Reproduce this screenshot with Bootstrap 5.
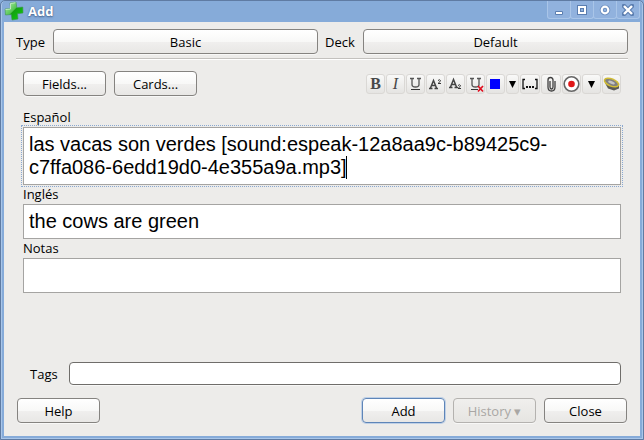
<!DOCTYPE html>
<html lang="en">
<head>
<meta charset="utf-8">
<meta name="viewport" content="width=device-width, initial-scale=1">
<title>Add</title>
<link href="https://cdn.jsdelivr.net/npm/bootstrap@5.3.0/dist/css/bootstrap.min.css" rel="stylesheet">
<style>
body { font: 13px/18px "Open Sans", "Noto Sans", sans-serif; color: #000; background: #86abd9; }
.win { border: 1px solid #5f7ba3; border-radius: 5px 5px 0 0; box-shadow: inset 1px 0 #a9c6e9, inset -1px 0 #a9c6e9, inset 0 -1px #a9c6e9; padding: 0 3px 3px; background: #86abd9; }
.titlebar { height: 21px; color: #fff; }
.titlebar h1 { font-size: 13px; line-height: 21px; font-weight: 700; text-shadow: 0 1px 2px #45648f, 0 0 1px #45648f; }
.plus { width: 20px; height: 20px; }
.wbtn { width: 24px; height: 18px; padding: 0; border: 1px solid #a9c5e8; border-top: 0; border-radius: 0 0 3px 3px; background: #91b2de; margin-left: -1px; }
.wbtn svg { width: 12px; height: 12px; flex-shrink: 0; }
.panel { background: #edecea; padding: 7px 12px 13px; }
.sbtn { height: 25px; padding: 0 4px; font-size: 13px; line-height: 18px; border: 1px solid #858380; border-radius: 4px; color: #000; background: linear-gradient(#fff, #f8f8f7 50%, #f0efee 52%, #e8e7e5); box-shadow: 0 1px #f8f8f7; }
.w-std { width: 83px; }
.sbtn.primary { border-color: #5e85b8; box-shadow: 0 0 0 1px #bfd0e6; }
.sbtn:disabled { color: #a9a7a4; border-color: #b4b2af; background: linear-gradient(#f0efed, #e6e5e2); opacity: 1; }
.lab-type { width: 37px; }
.lab-deck { width: 45px; padding-left: 7px; }
.rule { border-top: 1px solid #c3c1be; border-bottom: 1px solid #fff; height: 2px; margin: 4px 0 11px; }
.inner { padding: 0 7px; }
.tools { gap: 1px; }
.tbtn { width: 19px; height: 20px; padding: 0; border: 1px solid #dad8d5; border-radius: 3px; background: linear-gradient(#f9f9f8, #e5e4e2); color: #484848; font: 16px/18px "Liberation Serif", serif; }
.tbtn svg { width: 17px; height: 18px; display: block; }
.tbtn.slim { width: 13px; }
.tbtn.slim svg { width: 11px; }
.tbtn.wide { width: 20px; }
.tbtn.wide svg { width: 18px; }
.fields { min-height: 254px; margin-top: 12px; }
.flabel { line-height: 19px; height: 19px; }
.frame { position: relative; }
.edit { display: block; width: 100%; height: 35px; padding: 5px; border: 1px solid #a5a4a2; background: #fff; color: #000; font: 20px/23px "Liberation Sans", Arial, sans-serif; resize: none; overflow: hidden; outline: 0; border-radius: 0; }
.edit.two { height: 58px; }
.frame.active::after { content: ""; position: absolute; inset: -2px; border: 1px dotted #8aa8d0; pointer-events: none; }
.caret { position: absolute; left: 323px; top: 29px; width: 1px; height: 23px; background: #000; }
.tags { height: 23px; border: 1px solid #6f6d6a; border-radius: 4px; background: #fff; padding: 0 4px; font-size: 13px; box-shadow: 0 1px #f8f8f7; min-width: 0; }
.lab-tags { width: 46px; padding-left: 7px; }
.foot { margin: 13px 1px 0; gap: 8px; }
</style>
<script src="https://cdn.jsdelivr.net/npm/bootstrap@5.3.0/dist/js/bootstrap.bundle.min.js"></script>
</head>
<body>
<div class="win min-vh-100 d-flex flex-column">
  <header class="titlebar d-flex align-items-start">
    <svg class="plus" viewBox="0 0 20 20" aria-hidden="true">
      <defs><linearGradient id="g" x1="0" y1="0" x2="1" y2="1"><stop offset="0" stop-color="#b8efb3"/><stop offset=".45" stop-color="#56c653"/><stop offset=".5" stop-color="#14a012"/><stop offset="1" stop-color="#0bd30b"/></linearGradient></defs>
      <path d="M6 2l6-1 .8 5.700 6-.7.200 6-5.500.700.500 5.300-6 1-.800-5.500-5.700.500-.400-6 5.400-.600z" fill="url(#g)" stroke="#3f9650" stroke-width=".6"/>
      <path d="M1.500 8.500l5-.5L6.500 2.500l5-.8" fill="none" stroke="#d6f5d3" stroke-width=".8"/>
    </svg>
    <h1 class="mb-0 ms-1 mt-0 flex-grow-1">Add</h1>
    <div class="d-flex">
      <button class="wbtn d-flex align-items-center justify-content-center" aria-label="Minimize"><svg viewBox="0 0 12 12"><path d="M2.500 7.500h7v3h-7z" fill="#fff" stroke="#5b7eb0"/></svg></button>
      <button class="wbtn d-flex align-items-center justify-content-center" aria-label="Maximize"><svg viewBox="0 0 12 12"><path d="M1 1h10v10H1z" fill="#5b7eb0"/><path d="M2 2h8v8H2z" fill="#fff"/><path d="M4 4h4v4H4z" fill="#5b7eb0"/><path d="M5 5h2v2H5z" fill="#91b2de"/></svg></button>
      <button class="wbtn d-flex align-items-center justify-content-center" aria-label="Restore"><svg viewBox="0 0 12 12"><circle cx="6" cy="6" r="3.300" fill="none" stroke="#6c8fc0" stroke-width="4"/><circle cx="6" cy="6" r="3.300" fill="none" stroke="#fff" stroke-width="2.200"/></svg></button>
      <button class="wbtn d-flex align-items-center justify-content-center" aria-label="Close window"><svg viewBox="0 0 12 12"><path d="M2 2l8 8M10 2l-8 8" stroke="#5b7eb0" stroke-width="4.500" stroke-linecap="square"/><path d="M2 2l8 8M10 2l-8 8" stroke="#fff" stroke-width="2.400"/></svg></button>
    </div>
  </header>
  <main class="panel flex-grow-1">
    <div class="d-flex align-items-center pe-px">
      <label class="lab-type flex-shrink-0" for="type">Type</label>
      <button class="sbtn flex-fill w-50" id="type">Basic</button>
      <label class="lab-deck flex-shrink-0" for="deck">Deck</label>
      <button class="sbtn flex-fill w-50" id="deck">Default</button>
    </div>
    <div class="rule"></div>
    <div class="inner">
      <div class="d-flex align-items-center gap-2">
        <button class="sbtn w-std">Fields...</button>
        <button class="sbtn w-std">Cards...</button>
        <div class="tools d-flex ms-auto" role="toolbar" aria-label="Formatting">
          <button class="tbtn fw-bold" aria-label="Bold">B</button>
          <button class="tbtn fst-italic" aria-label="Italic">I</button>
          <button class="tbtn" aria-label="Underline"><svg viewBox="0 0 17 18"><path d="M3 3.500h4M10 3.500h4M5 3.500v6q0 2.500 3.500 2.500T12 9.500v-6" fill="none" stroke="#555" stroke-width="1.300"/><path d="M4 14.500h9" stroke="#333"/></svg></button>
          <button class="tbtn" aria-label="Superscript"><svg viewBox="0 0 17 18"><path d="M2 13.500h3.500M7.500 13.500H11M3.500 13L6.500 5.500l3 7.500M4.500 10.500h4" fill="none" stroke="#444" stroke-width="1.500"/><path d="M11 5.500q2-1.500 2.500 0 0 1-2.500 3h3" fill="none" stroke="#333"/></svg></button>
          <button class="tbtn" aria-label="Subscript"><svg viewBox="0 0 17 18"><path d="M2 12.500h3.500M7.500 12.500H11M3.500 12L6.500 4.500l3 7.500M4.500 9.500h4" fill="none" stroke="#444" stroke-width="1.500"/><path d="M11 10.500q2-1.500 2.500 0 0 1-2.500 3h3" fill="none" stroke="#333"/></svg></button>
          <button class="tbtn" aria-label="Remove formatting"><svg viewBox="0 0 17 18"><path d="M3 3.500h4M10 3.500h4M5 3.500v6q0 2.500 3.500 2.500T12 9.500v-6" fill="none" stroke="#555" stroke-width="1.300"/><path d="M4 14.500h7" stroke="#333"/><path d="M11 11l5 5.500M16 11l-5 5.500" stroke="#e01020" stroke-width="1.700"/></svg></button>
          <button class="tbtn" aria-label="Text colour"><svg viewBox="0 0 17 18"><path d="M3 4h10v10H3z" fill="#00f"/></svg></button>
          <button class="tbtn slim" aria-label="Choose colour"><svg viewBox="0 0 11 18"><path d="M2 6h7l-3.500 7z" fill="#000"/></svg></button>
          <button class="tbtn wide" aria-label="Cloze"><svg viewBox="0 0 18 18"><path d="M4 4.500H2v9h2M14 4.500h2v9h-2" fill="none" stroke="#111" stroke-width="1.300"/><path d="M5 11h2v2H5zM8 11h2v2H8zM11 11h2v2h-2z" fill="#111"/></svg></button>
          <button class="tbtn wide" aria-label="Attach file"><svg viewBox="0 0 18 18"><path d="M8 6v6q0 2 1.500 2t1.500-2V5q0-2.500-2.500-2.500T6 5v7q0 4 3.500 4T13 12V6" fill="none" stroke="#3f3f3f" stroke-width="1.300"/></svg></button>
          <button class="tbtn" aria-label="Record audio"><svg viewBox="0 0 17 18"><circle cx="8.500" cy="9" r="7.300" fill="#fff" stroke="#666" stroke-width="1.600"/><circle cx="8.500" cy="9" r="3.300" fill="#e01818"/></svg></button>
          <button class="tbtn" aria-label="More"><svg viewBox="0 0 17 18"><path d="M5 6h7l-3.500 7z" fill="#000"/></svg></button>
          <button class="tbtn" aria-label="Speak"><svg viewBox="0 0 17 18"><path d="M2 8l3 5.500 6 2 5-2V9z" fill="#5a5a55"/><ellipse cx="8.500" cy="7.500" rx="7.500" ry="3.600" transform="rotate(22 8.500 7.500)" fill="#808080" stroke="#d2bd35" stroke-width="1.500"/><ellipse cx="8.500" cy="7.500" rx="3.500" ry="1.300" transform="rotate(22 8.500 7.500)" fill="#c4c4c4"/></svg></button>
        </div>
      </div>
      <div class="fields">
        <label class="flabel d-block" for="f1">Español</label>
        <div class="frame active"><textarea class="edit two" id="f1" spellcheck="false">las vacas son verdes [sound:espeak-12a8aa9c-b89425c9-c7ffa086-6edd19d0-4e355a9a.mp3]</textarea><span class="caret"></span></div>
        <label class="flabel d-block" for="f2">Inglés</label>
        <div class="frame"><textarea class="edit" id="f2" spellcheck="false">the cows are green</textarea></div>
        <label class="flabel d-block" for="f3">Notas</label>
        <div class="frame"><textarea class="edit" id="f3"></textarea></div>
      </div>
      <div class="d-flex align-items-center">
        <label class="lab-tags flex-shrink-0" for="tags">Tags</label>
        <input class="tags flex-grow-1" id="tags" type="text">
      </div>
    </div>
    <div class="foot d-flex">
      <button class="sbtn w-std me-auto">Help</button>
      <button class="sbtn w-std primary">Add</button>
      <button class="sbtn w-std" disabled>History ▾</button>
      <button class="sbtn w-std">Close</button>
    </div>
  </main>
</div>
</body>
</html>
